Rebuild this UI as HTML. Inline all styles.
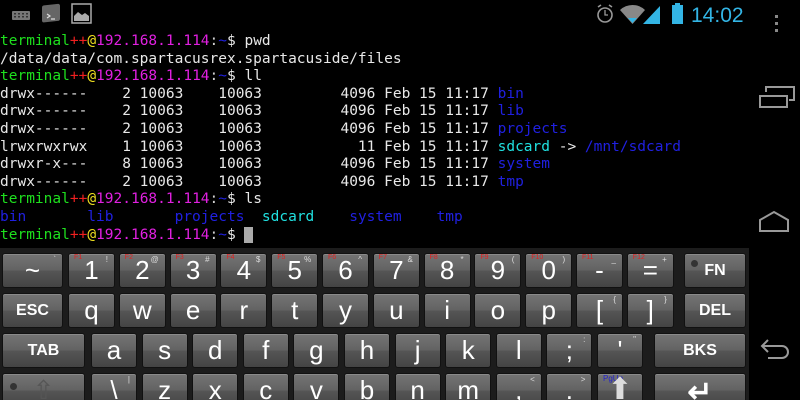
<!DOCTYPE html>
<html><head><meta charset="utf-8"><style>
*{margin:0;padding:0;box-sizing:border-box}
html,body{width:800px;height:400px;background:#000;overflow:hidden}
body{position:relative;font-family:"Liberation Sans",sans-serif}
#term{position:absolute;left:0;top:33px;font-family:"DejaVu Sans Mono","Liberation Mono",monospace;font-size:14.5px;line-height:17.6px;color:#e8e8e8;white-space:pre}
.g{color:#1ee01e}.r{color:#f02020}.y{color:#f0e020}.m{color:#e020e0}.b{color:#2020e0}.c{color:#20e0e0}.w{color:#d0d0d0}
#kb{position:absolute;left:0;top:248px;width:749px;height:152px;background:#1c1c1c;overflow:hidden}
.k{position:absolute;border-radius:3px;border:1px solid #111;background:linear-gradient(#747474,#636363 48%,#555 52%,#444);color:#fff;text-align:center;font-size:26px;box-shadow:inset 0 1px 0 #8a8a8a}
.k .t{position:absolute;left:0;right:0;top:1px}
.k.s .t{font-size:16px;font-weight:bold;top:8px}
.k .f{position:absolute;left:5px;top:0px;font-size:7px;color:#e02020}
.k .u{position:absolute;right:6px;top:1px;font-size:8px;color:#ddd}
</style></head><body>
<svg style="position:absolute;left:0;top:0" width="800" height="40">
<rect x="12" y="11" width="18" height="9" rx="1" fill="#777"/>
<g fill="#333"><rect x="14" y="13" width="2" height="1.5"/><rect x="18" y="13" width="2" height="1.5"/><rect x="22" y="13" width="2" height="1.5"/><rect x="26" y="13" width="2" height="1.5"/><rect x="14" y="16" width="2" height="1.5"/><rect x="18" y="16" width="2" height="1.5"/><rect x="22" y="16" width="2" height="1.5"/><rect x="26" y="16" width="2" height="1.5"/></g>
<rect x="42" y="5" width="18" height="17" rx="2" fill="#666" transform="skewY(-6) translate(0,5)"/>
<path d="M47 14l3 2-3 2M51 19h4" stroke="#ddd" fill="none" stroke-width="1.2"/>
<rect x="72" y="4" width="19" height="19" fill="none" stroke="#aaa" stroke-width="1.5"/>
<path d="M74 21v-5l4-4 4 3 3-2 4 3v5z" fill="#aaa"/>
<circle cx="605" cy="15" r="7" fill="none" stroke="#999" stroke-width="1.6"/><path d="M605 10v5h3" stroke="#999" fill="none" stroke-width="1.3"/><path d="M598 7l3-2M612 7l-3-2" stroke="#999" stroke-width="1.6"/>
<path d="M620 10a18 18 0 0 1 25 0l-12.5 14z" fill="#888"/><path d="M628 18l4.5 5 4.5-5z" fill="#33b5e5"/>
<path d="M643 24l17-18v18z" fill="#33b5e5"/>
<rect x="672" y="5" width="11" height="19" fill="#33b5e5"/><rect x="675" y="3" width="5" height="3" fill="#33b5e5"/>
<text x="691" y="22" font-family="Liberation Sans,sans-serif" font-size="21" fill="#33b5e5">14:02</text>
<g fill="#888"><rect x="775" y="15" width="3" height="3"/><rect x="775" y="22" width="3" height="3"/><rect x="775" y="29" width="3" height="3"/></g>
</svg>
<svg style="position:absolute;left:748px;top:40px" width="52" height="360">
<path d="M18 52v-5h28v13h-5" stroke="#999" stroke-width="2" fill="none"/>
<rect x="12" y="56" width="27" height="11" fill="none" stroke="#999" stroke-width="2"/>
<path d="M12 180l14-8 14 8v11h-28z" fill="none" stroke="#999" stroke-width="2"/>
<path d="M20 300l-6 6 6 6M14 306h20a6 6 0 0 1 0 12h-14" fill="none" stroke="#999" stroke-width="2"/>
</svg>
<div id="term"><span class="g">terminal</span><span class="r">++</span><span class="y">@</span><span class="m">192.168.1.114</span><span class="w">:</span><span class="b">~</span>$ pwd
/data/data/com.spartacusrex.spartacuside/files
<span class="g">terminal</span><span class="r">++</span><span class="y">@</span><span class="m">192.168.1.114</span><span class="w">:</span><span class="b">~</span>$ ll
drwx------    2 10063    10063         4096 Feb 15 11:17 <span class="b">bin</span>
drwx------    2 10063    10063         4096 Feb 15 11:17 <span class="b">lib</span>
drwx------    2 10063    10063         4096 Feb 15 11:17 <span class="b">projects</span>
lrwxrwxrwx    1 10063    10063           11 Feb 15 11:17 <span class="c">sdcard</span> -&gt; <span class="b">/mnt/sdcard</span>
drwxr-x---    8 10063    10063         4096 Feb 15 11:17 <span class="b">system</span>
drwx------    2 10063    10063         4096 Feb 15 11:17 <span class="b">tmp</span>
<span class="g">terminal</span><span class="r">++</span><span class="y">@</span><span class="m">192.168.1.114</span><span class="w">:</span><span class="b">~</span>$ ls
<span class="b">bin       lib       projects  </span><span class="c">sdcard</span><span class="b">    system    tmp</span>
<span class="g">terminal</span><span class="r">++</span><span class="y">@</span><span class="m">192.168.1.114</span><span class="w">:</span><span class="b">~</span>$ <span style="background:#aaa"> </span></div>
<div id="kb"></div>
<script>
var kb=document.getElementById('kb');
function key(x,y,w,t,sm,f,u,extra){var d=document.createElement('div');d.className='k'+(sm?' s':'');d.style.left=x+'px';d.style.top=(y-248)+'px';d.style.width=w+'px';d.style.height='35px';
d.innerHTML=(f?'<span class="f">'+f+'</span>':'')+(u?'<span class="u">'+u+'</span>':'')+'<span class="t">'+t+'</span>'+(extra||'');kb.appendChild(d);}
var p=50.8,w=47;
key(2,253,61,'~',0,'','`');
var r1=['1','2','3','4','5','6','7','8','9','0','-','='],u1=['!','@','#','$','%','^','&amp;','*','(',')','_','+'];
for(var i=0;i<12;i++)key(68+i*p,253,w,r1[i],0,'F'+(i+1),u1[i]);
key(684,253,62,'FN',1,'','','<span style="position:absolute;left:6px;top:6px;width:7px;height:7px;border-radius:50%;background:#333"></span>');
key(2,293,61,'ESC',1);
var r2=['q','w','e','r','t','y','u','i','o','p','[',']'],u2=['','','','','','','','','','','{','}'];
for(i=0;i<12;i++)key(68+i*p,293,w,r2[i],0,'',u2[i]);
key(684,293,62,'DEL',1);
key(2,333,83,'TAB',1);
var r3=['a','s','d','f','g','h','j','k','l',';',"'"],u3=['','','','','','','','','',':','"'];
var p3=50.6;
for(i=0;i<11;i++)key(91+i*p3,333,46,r3[i],0,'',u3[i]);
key(654,333,92,'BKS',1);
key(2,373,83,'<span style="color:#555">&#8679;</span>',0,'','','<span style="position:absolute;left:7px;top:9px;width:7px;height:7px;border-radius:50%;background:#333"></span>');
var r4=['\\','z','x','c','v','b','n','m',',','.','<span style="font-size:30px;color:#ddd;line-height:28px">&#11014;</span>'],u4=['|','','','','','','','','&lt;','&gt;',''];
for(i=0;i<11;i++)key(91+i*p3,373,46,r4[i],0,i==10?'<span style="color:#22c;font-size:8px">PgUp</span>':'',u4[i]);
key(654,373,92,'<span style="font-size:30px;font-weight:bold">&#8629;</span>',0);
</script>
</body></html>
